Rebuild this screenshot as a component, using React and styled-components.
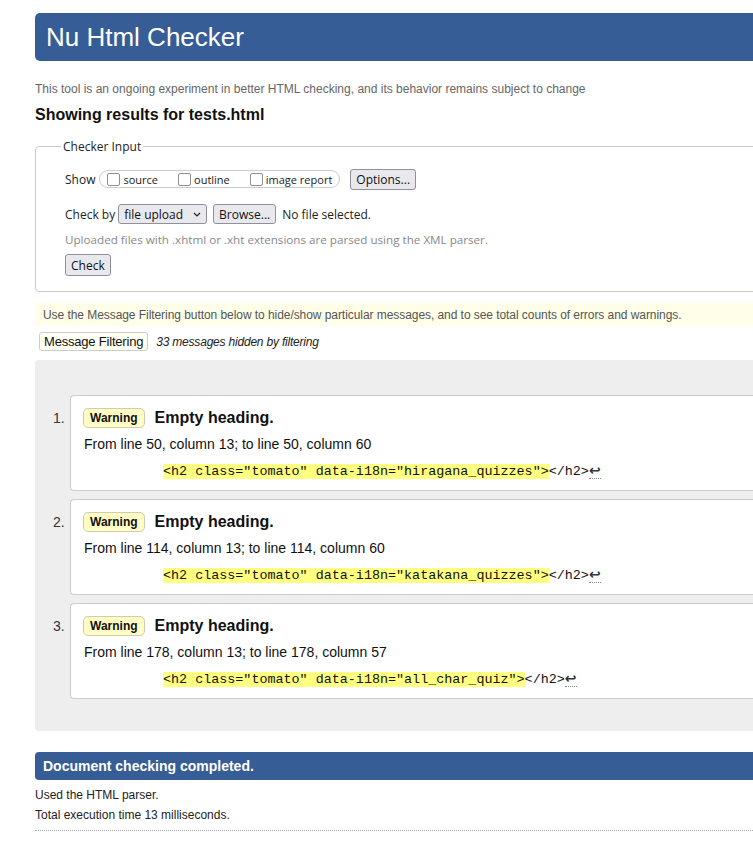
import React from "react";
import styled, { createGlobalStyle } from "styled-components";

const Global = createGlobalStyle`
  html, body { margin: 0; padding: 0; background: #fff; overflow: hidden; }
  body { font-family: "Liberation Sans", Arial, sans-serif; color: #222; }
`;

const Page = styled.div`
  width: 800px;
  padding: 13px 0 0 35px;
  display: flex;
  flex-direction: column;
`;

const Header = styled.header`
  height: 48px;
  background: #365d95;
  border-radius: 5px 0 0 5px;
  display: flex;
  align-items: center;
  padding: 0 11px;
`;

const Title = styled.h1`
  margin: 0;
  font-weight: normal;
  font-size: 26px;
  color: #fff;
  font-family: "Liberation Sans", Arial, sans-serif;
`;

const Intro = styled.p`
  margin: 20px 0 0;
  font-size: 12px;
  line-height: 16px;
  color: #666;
`;

const Showing = styled.h2`
  margin: 8px 0 0;
  font-size: 16px;
  line-height: 20px;
  font-weight: bold;
  color: #111;
`;

const Fieldset = styled.fieldset`
  margin: 13px 0 0;
  border: 1px solid #ccc;
  border-radius: 4px;
  padding: 3px 0 15px 29px;
  min-width: 0;
  font-family: "Open Sans", "Noto Sans", sans-serif;
  font-size: 12px;
  color: #222;
`;

const Legend = styled.legend`
  padding: 0 2px;
  margin-left: -4px;
  font-size: 12px;
  color: #222;
`;

const Row = styled.div`
  display: flex;
  align-items: center;
  gap: ${(p) => p.$gap || 4}px;
  margin-top: ${(p) => p.$mt || 0}px;
  height: ${(p) => p.$h || 22}px;
`;

const Pill = styled.div`
  display: flex;
  align-items: center;
  height: 16px;
  border: 1px solid #ccc;
  border-radius: 9px;
  padding: 0 7px;
  gap: 20px;
`;

const CheckLabel = styled.label`
  display: flex;
  align-items: center;
  gap: 3px;
  font-size: 11px;
  color: #222;
`;

const Box = styled.input`
  appearance: none;
  margin: 0;
  width: 13px;
  height: 13px;
  border: 1px solid #8f8f9d;
  border-radius: 2px;
  background: #fff;
`;

const Button = styled.button`
  font-family: "Open Sans", "Noto Sans", sans-serif;
  font-size: 12px;
  color: #111;
  background: #e9e9ed;
  border: 1px solid #8f8f9d;
  border-radius: 3px;
  height: ${(p) => p.$h || 20}px;
  padding: 0 ${(p) => p.$px || 5}px;
  margin-left: ${(p) => p.$ml || 0}px;
  display: flex;
  align-items: center;
  gap: 10px;
`;

const FileName = styled.span`
  margin-left: 3px;
`;

const Hint = styled.div`
  margin-top: 7px;
  font-size: 11.65px;
  line-height: 16px;
  color: #888;
`;

const Notice = styled.div`
  margin-top: 11px;
  height: 23px;
  background: #fefee9;
  display: flex;
  align-items: center;
  padding-left: 8px;
  font-size: 12px;
  letter-spacing: -0.06px;
  color: #555;
`;

const FilterRow = styled.div`
  display: flex;
  align-items: center;
  gap: 8px;
  margin-top: 6px;
  padding-left: 4px;
`;

const FilterButton = styled.button`
  font-family: "Liberation Sans", Arial, sans-serif;
  font-size: 13px;
  letter-spacing: -0.2px;
  color: #111;
  height: 19px;
  padding: 0 4px;
  background: #fffff4;
  border: 1px solid #ccc;
  border-radius: 3px;
`;

const Hidden = styled.i`
  font-size: 12px;
  letter-spacing: -0.2px;
  color: #222;
`;

const Results = styled.ol`
  margin: 9px 0 0;
  background: #eee;
  border-radius: 4px 0 0 4px;
  padding: 35px 0 32px 35px;
  list-style: none;
  display: flex;
  flex-direction: column;
  gap: 8px;
`;

const Item = styled.li`
  position: relative;
  background: #fff;
  border: 1px solid #ccc;
  border-radius: 4px 0 0 4px;
  border-right: none;
  padding: 12px 0 8px 12px;
`;

const Num = styled.span`
  position: absolute;
  left: -18px;
  top: 12px;
  line-height: 20px;
  font-size: 14px;
  color: #333;
`;

const Head = styled.div`
  display: flex;
  align-items: center;
  gap: 10px;
  height: 20px;
`;

const Badge = styled.span`
  display: inline-flex;
  align-items: center;
  height: 18px;
  padding: 0 6px;
  background: #fffcc4;
  border: 1px solid #cdcdb0;
  border-radius: 5px;
  font-size: 12px;
  font-weight: bold;
  color: #111;
`;

const Msg = styled.span`
  font-size: 16px;
  font-weight: bold;
  color: #111;
`;

const Location = styled.p`
  margin: 6px 0 0 1px;
  font-size: 14px;
  line-height: 20px;
  color: #111;
`;

const Code = styled.p`
  margin: 8px 0 0 80px;
  font-family: "Liberation Mono", monospace;
  font-size: 13.4px;
  line-height: 20px;
  height: 20px;
  color: #111;
  white-space: pre;
`;

const Mark = styled.mark`
  background: #ffff80;
  color: #111;
`;

const Ret = styled.span`
  font-family: "DejaVu Sans", sans-serif;
  font-size: 14px;
  line-height: 16px;
  font-weight: bold;
  color: #333;
  border-bottom: 1px dotted #888;
`;

const Done = styled.div`
  margin-top: 21px;
  height: 28px;
  background: #365d95;
  border-radius: 4px 0 0 4px;
  display: flex;
  align-items: center;
  padding-left: 8px;
  font-size: 14px;
  font-weight: bold;
  color: #fff;
`;

const Stat = styled.p`
  margin: ${(p) => p.$mt || 0}px 0 0;
  font-size: 12px;
  line-height: 16px;
  color: #222;
`;

const Rule = styled.hr`
  margin: 7px 0 0;
  border: none;
  border-top: 1px dotted #aaa;
`;

const Chevron = () => (
  <svg width="8" height="5" viewBox="0 0 8 5">
    <path d="M1 1l3 3 3-3" fill="none" stroke="#222" strokeWidth="1.2" />
  </svg>
);

const items = [
  { n: 1, from: 50, col: 13, to: 50, col2: 60, attr: "hiragana_quizzes" },
  { n: 2, from: 114, col: 13, to: 114, col2: 60, attr: "katakana_quizzes" },
  { n: 3, from: 178, col: 13, to: 178, col2: 57, attr: "all_char_quiz" },
];

export default function App() {
  return (
    <>
      <Global />
      <Page>
        <Header>
          <Title>Nu Html Checker</Title>
        </Header>
        <Intro>
          This tool is an ongoing experiment in better HTML checking, and its behavior remains subject to change
        </Intro>
        <Showing>Showing results for tests.html</Showing>
        <Fieldset>
          <Legend>Checker Input</Legend>
          <Row $mt={10}>
            <span>Show</span>
            <Pill>
              <CheckLabel><Box type="checkbox" />source</CheckLabel>
              <CheckLabel><Box type="checkbox" />outline</CheckLabel>
              <CheckLabel><Box type="checkbox" />image report</CheckLabel>
            </Pill>
            <Button $h={21} $ml={6}>Options...</Button>
          </Row>
          <Row $mt={13} $gap={3}>
            <span>Check by</span>
            <Button $px={5}>file upload <Chevron /></Button>
            <Button $ml={3}>Browse...</Button>
            <FileName>No file selected.</FileName>
          </Row>
          <Hint>Uploaded files with .xhtml or .xht extensions are parsed using the XML parser.</Hint>
          <Row $mt={6}>
            <Button $h={22}>Check</Button>
          </Row>
        </Fieldset>
        <Notice>
          Use the Message Filtering button below to hide/show particular messages, and to see total counts of errors and warnings.
        </Notice>
        <FilterRow>
          <FilterButton>Message Filtering</FilterButton>
          <Hidden>33 messages hidden by filtering</Hidden>
        </FilterRow>
        <Results>
          {items.map((it) => (
            <Item key={it.n}>
              <Num>{it.n}.</Num>
              <Head>
                <Badge>Warning</Badge>
                <Msg>Empty heading.</Msg>
              </Head>
              <Location>
                From line {it.from}, column {it.col}; to line {it.to}, column {it.col2}
              </Location>
              <Code>
                <Mark>{`<h2 class="tomato" data-i18n="${it.attr}">`}</Mark>
                {"</h2>"}
                <Ret>↩</Ret>
              </Code>
            </Item>
          ))}
        </Results>
        <Done>Document checking completed.</Done>
        <Stat $mt={7}>Used the HTML parser.</Stat>
        <Stat $mt={4}>Total execution time 13 milliseconds.</Stat>
        <Rule />
      </Page>
    </>
  );
}
